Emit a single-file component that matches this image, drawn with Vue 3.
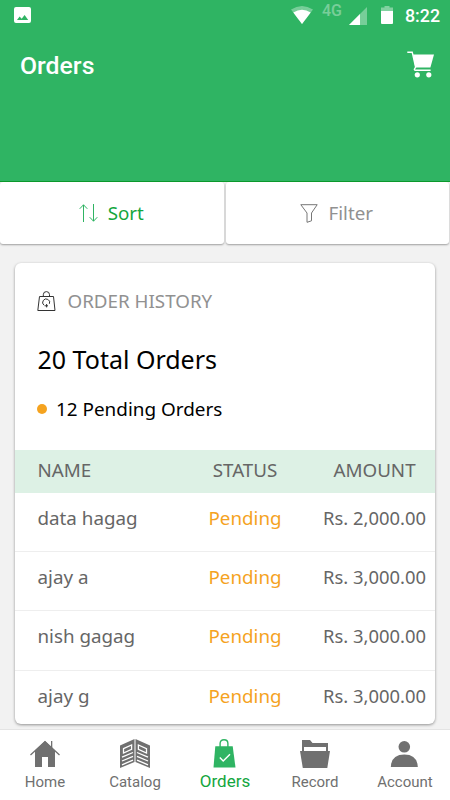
<template>
  <div class="screen">
    <header class="header">
      <div class="status-bar">
        <svg class="status-image" width="17" height="17" viewBox="0 0 17 17">
          <path
            fill="#fff"
            fill-rule="evenodd"
            d="M2 0H15Q17 0 17 2V14Q17 16 15 16H2Q0 16 0 14V2Q0 0 2 0ZM3 13H14.2L10.6 8L7.7 11.8L5.6 9.6Z"
          />
        </svg>
        <div class="status-right">
          <svg class="status-wifi" width="22" height="18" viewBox="0 0 22 18">
            <path fill="#fff" opacity=".35" d="M0 3.6Q11 -3.6 22 3.6L11 18Z" />
            <path fill="#fff" d="M2.3 6.6Q11 .9 19.7 6.6L11 18Z" />
          </svg>
          <span class="status-network">4G</span>
          <svg class="status-signal" width="18" height="18" viewBox="0 0 18 18">
            <path fill="#fff" opacity=".35" d="M18 0V18H0Z" />
            <path fill="#fff" d="M11 7V18H0Z" />
          </svg>
          <svg class="status-battery" width="12" height="18" viewBox="0 0 12 18">
            <path fill="#fff" opacity=".4" d="M3.5 0H8.5V1.5H12V5H0V1.5H3.5Z" />
            <path fill="#fff" d="M0 5H12V17Q12 18 11 18H1Q0 18 0 17Z" />
          </svg>
          <span class="status-time">8:22</span>
        </div>
      </div>
      <div class="title-bar">
        <h1 class="title">Orders</h1>
        <svg class="cart" width="27" height="27" viewBox="0 0 27 27">
          <path fill="#fff" d="M6 3.5H27L23.4 16.5H8.3Z" />
          <path
            fill="none"
            stroke="#fff"
            stroke-width="1.4"
            d="M.3 1.2H5.2L8.6 16.2L7.4 18.2Q7.2 19.2 8.4 19.2H23.6"
          />
          <circle cx="10.3" cy="23.8" r="2.6" fill="#fff" />
          <circle cx="21.8" cy="23.8" r="2.6" fill="#fff" />
        </svg>
      </div>
    </header>

    <div class="toolbar">
      <button class="tool tool--active">
        <svg class="tool-sort" width="19" height="18" viewBox="0 0 19 18">
          <path
            fill="none"
            stroke="#2fb463"
            stroke-width="1"
            d="M4.5 18V.8M.7 4.8L4.5 .8L8.3 4.8M14.5 0V17.2M10.7 13.2L14.5 17.2L18.3 13.2"
          />
        </svg>
        <span>Sort</span>
      </button>
      <button class="tool">
        <svg class="tool-filter" width="18" height="19" viewBox="0 0 18 19">
          <path
            fill="none"
            stroke="#777"
            stroke-width="1"
            d="M.8 .7H17.2L11.5 9V16.8L7 18.3V9Z"
          />
        </svg>
        <span>Filter</span>
      </button>
    </div>

    <main class="card">
      <div class="card-heading">
        <svg class="card-icon" width="19" height="21" viewBox="0 0 19 21">
          <g fill="none" stroke="#333" stroke-width="1">
            <path d="M2.5 5.5H16.5L18 19.5H.8Z" />
            <path d="M6.3 5.5V3.7Q6.3 .6 9.4 .6Q12.5 .6 12.5 3.7V5.5" />
            <path d="M7 14.2A3.5 3.5 0 1 1 12.4 12.8M7.6 14.8H11M9.6 13V16.4" />
          </g>
        </svg>
        <span>ORDER HISTORY</span>
      </div>
      <div class="total">20 Total Orders</div>
      <div class="pending"><i class="dot"></i><span>12 Pending Orders</span></div>

      <div class="row row--head">
        <span class="cell-name">NAME</span>
        <span class="cell-status">STATUS</span>
        <span class="cell-amount">AMOUNT</span>
      </div>
      <div v-for="order in orders" :key="order.name" class="row">
        <span class="cell-name">{{ order.name }}</span>
        <span class="cell-status">{{ order.status }}</span>
        <span class="cell-amount">{{ order.amount }}</span>
      </div>
    </main>

    <nav class="nav">
      <a
        v-for="item in navItems"
        :key="item.name"
        class="nav-item"
        :class="{ 'nav-item--active': item.name === activeNav }"
      >
        <svg v-if="item.name === 'Home'" width="30" height="30" viewBox="0 0 30 30">
          <path fill="currentColor" d="M15 2L25 11.5V28H18V18H12V28H5V11.5Z" />
          <path fill="none" stroke="currentColor" stroke-width="1.3" d="M.5 16L15 2.6L29.5 16" />
          <path fill="currentColor" d="M21 2H22.3V10L21 8.8Z" />
        </svg>
        <svg v-else-if="item.name === 'Catalog'" width="30" height="30" viewBox="0 0 30 30">
          <path fill="currentColor" d="M0 6.5L14.5 0V23L0 29ZM15.5 0L30 6.5V29L15.5 23Z" />
          <g fill="none" stroke="#fff" stroke-width="1.3">
            <path d="M3.5 9.6L11.6 6V10.4L3.5 14ZM2 18.2L13 13.5M2 22L13 17.3M2 25.8L13 21.1" />
            <path d="M18.4 6L26.5 9.6V14L18.4 10.4ZM17 13.5L28 18.2M17 17.3L28 22M17 21.1L28 25.8" />
          </g>
        </svg>
        <svg v-else-if="item.name === 'Orders'" width="30" height="30" viewBox="0 0 30 30">
          <path fill="#2fb463" d="M5.3 7.2H22.7L25.5 28.5H3.5Z" />
          <path
            fill="none"
            stroke="#2fb463"
            stroke-width="1.4"
            d="M10.1 8V4.5Q10.1 .8 14 .8Q17.9 .8 17.9 4.5V8"
          />
          <path fill="none" stroke="#fff" stroke-width="1.4" d="M9.8 18.5L13.2 22L20 15.2" />
        </svg>
        <svg v-else-if="item.name === 'Record'" width="30" height="30" viewBox="0 0 30 30">
          <path
            fill="currentColor"
            fill-rule="evenodd"
            d="M2 1H10L12.5 4H28V12H2ZM4 8V12H26V8Z"
          />
          <path fill="currentColor" d="M0 12H30L27.3 29H2.8Z" />
        </svg>
        <svg v-else width="30" height="30" viewBox="0 0 30 30">
          <circle cx="14.3" cy="7.8" r="5.8" fill="currentColor" />
          <path fill="currentColor" d="M.8 28Q1.3 15.5 14.3 15.5Q27.3 15.5 27.8 28Z" />
        </svg>
        <span class="nav-label">{{ item.name }}</span>
      </a>
    </nav>
  </div>
</template>

<script setup>
import { ref } from 'vue'

const orders = ref([
  { name: 'data hagag', status: 'Pending', amount: 'Rs. 2,000.00' },
  { name: 'ajay a', status: 'Pending', amount: 'Rs. 3,000.00' },
  { name: 'nish gagag', status: 'Pending', amount: 'Rs. 3,000.00' },
  { name: 'ajay g', status: 'Pending', amount: 'Rs. 3,000.00' },
])

const navItems = [
  { name: 'Home' },
  { name: 'Catalog' },
  { name: 'Orders' },
  { name: 'Record' },
  { name: 'Account' },
]

const activeNav = ref('Orders')
</script>

<style>
body {
  margin: 0;
  background: #f2f2f2;
}
</style>

<style scoped>
.screen {
  display: flex;
  flex-direction: column;
  width: 450px;
  height: 800px;
  overflow: hidden;
  background: #f2f2f2;
  font-family: 'Noto Sans', sans-serif;
}

.screen svg {
  display: block;
  flex: none;
}

.header {
  box-sizing: border-box;
  height: 182px;
  flex: none;
  border-bottom: 1px solid #0c9c2c;
  background: #2fb463;
  color: #fff;
  font-family: Roboto, sans-serif;
}

.status-bar {
  display: flex;
  justify-content: space-between;
  height: 32px;
  padding: 0 10px 0 14px;
}

.status-image {
  margin-top: 7px;
}

.status-right {
  display: flex;
}

.status-wifi {
  margin-top: 6px;
}

.status-network {
  width: 21px;
  margin-left: 9px;
  margin-top: 1px;
  font-size: 16px;
  font-weight: 500;
  line-height: 20px;
  opacity: 0.35;
}

.status-signal {
  margin-top: 7px;
  margin-left: 6px;
}

.status-battery {
  margin-top: 6px;
  margin-left: 14px;
}

.status-time {
  margin-left: 12px;
  margin-top: 5px;
  font-size: 17.8px;
  font-weight: 500;
  line-height: 22px;
}

.title-bar {
  display: flex;
  justify-content: space-between;
  padding: 19px 16px 0 20px;
}

.title {
  margin: 0;
  font-size: 24.8px;
  font-weight: 500;
  line-height: 30px;
}

.toolbar {
  display: flex;
  gap: 2px;
  height: 62px;
  flex: none;
  padding-right: 1px;
  margin-bottom: 1px;
}

.tool {
  display: flex;
  flex: 1;
  align-items: center;
  justify-content: center;
  gap: 10px;
  padding: 0 1px 0 0;
  border: 0;
  border-radius: 3px;
  background: #fff;
  box-shadow: 0 1px 2px rgba(0, 0, 0, 0.35);
  color: #919191;
  font-family: inherit;
  font-size: 18.8px;
}

.tool--active {
  color: #13a63d;
}

.card {
  height: 461px;
  flex: none;
  margin: 18px 15px 0;
  overflow: hidden;
  border-radius: 6px;
  background: #fff;
  box-shadow: 0 1px 3px rgba(0, 0, 0, 0.4);
}

.card-heading {
  display: flex;
  align-items: center;
  gap: 11.5px;
  height: 26px;
  padding: 25px 22px 0;
  color: #919191;
  font-size: 18.8px;
}

.total {
  margin-top: 28px;
  padding-left: 22.5px;
  color: #000;
  font-size: 25px;
  line-height: 34px;
}

.pending {
  display: flex;
  align-items: center;
  gap: 9px;
  height: 26px;
  margin-top: 20px;
  padding-left: 22px;
  color: #000;
  font-size: 18.9px;
}

.dot {
  width: 10px;
  height: 10px;
  border-radius: 50%;
  background: #f5a31f;
}

.row {
  box-sizing: border-box;
  display: grid;
  grid-template-columns: 160px 140px 119px;
  align-items: baseline;
  height: 59.2px;
  padding-top: 12px;
  border-bottom: 1.5px solid #eee;
  color: #666;
  font-size: 18.8px;
  line-height: 26px;
}

.row--head {
  height: 43px;
  margin-top: 28px;
  padding-top: 7px;
  border: 0;
  background: #ddf1e5;
}

.cell-name {
  padding-left: 22.5px;
}

.cell-status,
.cell-amount {
  text-align: center;
  white-space: nowrap;
}

.row:not(.row--head) .cell-status {
  color: #f5a31f;
}

.row:not(.row--head) .cell-amount {
  font-size: 18.4px;
}

.nav {
  box-sizing: border-box;
  display: grid;
  grid-template-columns: repeat(5, 1fr);
  height: 71px;
  margin-top: auto;
  border-top: 1px solid #e4e4e4;
  background: #fff;
  z-index: 1;
}

.nav-item {
  display: flex;
  flex-direction: column;
  align-items: center;
  padding-top: 9px;
  color: #707070;
}

.nav-label {
  margin-top: 4px;
  font-family: Roboto, sans-serif;
  font-size: 15px;
  line-height: 18px;
}

.nav-item--active {
  color: #13a63d;
}

.nav-item--active .nav-label {
  margin-top: 3px;
  font-size: 17px;
}
</style>
